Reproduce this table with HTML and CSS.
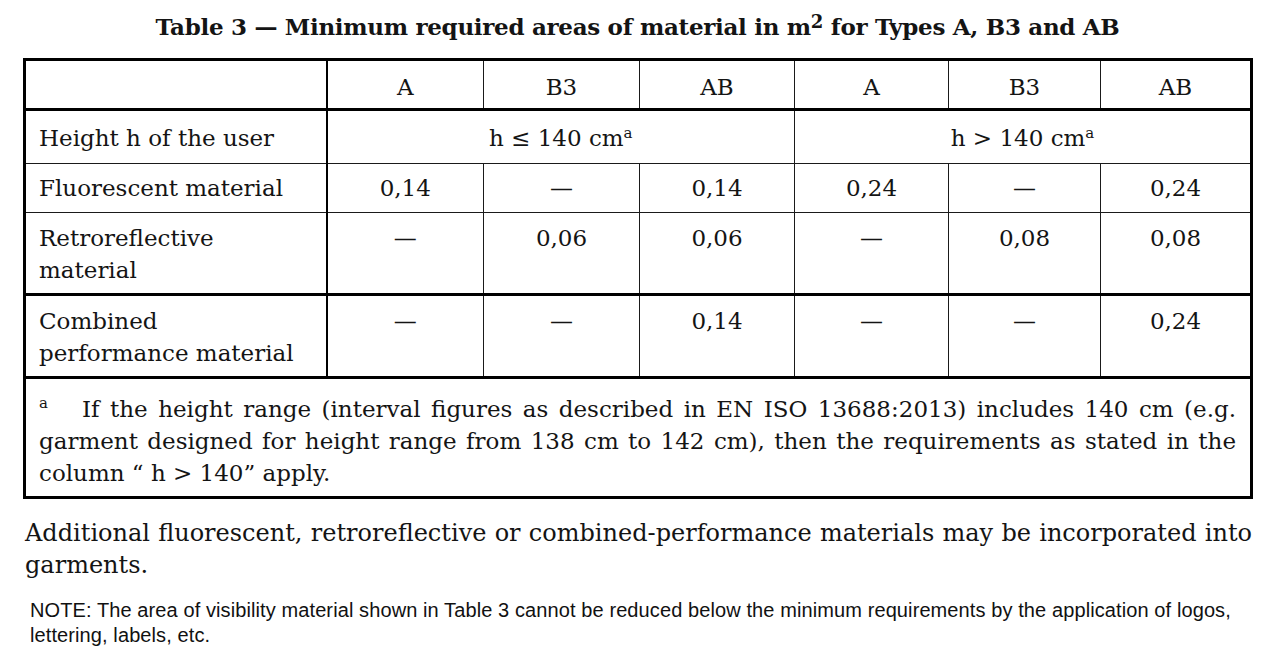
FILE: index.html
```html
<!DOCTYPE html>
<html lang="en">
<head>
<meta charset="utf-8">
<title>Table 3</title>
<link rel="stylesheet" href="styles.css">
</head>
<body>
<div class="page">
  <h1 class="title">Table 3 — Minimum required areas of material in m<sup>2</sup> for Types A, B3 and AB</h1>
  <table class="spec">
    <colgroup>
      <col class="c-label">
      <col class="c1"><col class="c2"><col class="c3">
      <col class="c4"><col class="c5"><col class="c6">
    </colgroup>
    <tr class="r-head thick">
      <td class="label"></td>
      <td>A</td><td>B3</td><td>AB</td>
      <td>A</td><td>B3</td><td>AB</td>
    </tr>
    <tr class="r-height">
      <td class="label">Height h of the user</td>
      <td colspan="3">h ≤ 140 cm<sup class="fn">a</sup></td>
      <td colspan="3">h &gt; 140 cm<sup class="fn">a</sup></td>
    </tr>
    <tr class="r-fluor">
      <td class="label">Fluorescent material</td>
      <td>0,14</td><td>—</td><td>0,14</td>
      <td>0,24</td><td>—</td><td>0,24</td>
    </tr>
    <tr class="r-retro thick">
      <td class="label">Retroreflective<br>material</td>
      <td>—</td><td>0,06</td><td>0,06</td>
      <td>—</td><td>0,08</td><td>0,08</td>
    </tr>
    <tr class="r-comb thick">
      <td class="label">Combined<br>performance material</td>
      <td>—</td><td>—</td><td>0,14</td>
      <td>—</td><td>—</td><td>0,24</td>
    </tr>
    <tr class="r-note">
      <td colspan="7" class="footnote"><span class="fn-mark">a</span>If the height range (interval figures as described in EN ISO 13688:2013) includes 140 cm (e.g. garment designed for height range from 138 cm to 142 cm), then the requirements as stated in the column “ h &gt; 140” apply.</td>
    </tr>
  </table>
  <p class="para">Additional fluorescent, retroreflective or combined-performance materials may be incorporated into garments.</p>
  <p class="note">NOTE: The area of visibility material shown in Table 3 cannot be reduced below the minimum requirements by the application of logos, lettering, labels, etc.</p>
</div>
</body>
</html>
```

FILE: styles.css
```css
html, body {
  margin: 0;
  padding: 0;
  background: #ffffff;
}

.page {
  padding: 0 27px 0 23px;
  color: #141414;
  font-family: "DejaVu Serif", "Liberation Serif", serif;
}

.title {
  margin: 0;
  height: 58px;
  box-sizing: border-box;
  padding-top: 9px;
  text-align: center;
  font-size: 23px;
  line-height: 36px;
  font-weight: bold;
  letter-spacing: -0.3px;
}

.title sup {
  font-size: 18px;
  line-height: 0;
  vertical-align: 7px;
}

.spec {
  width: 1227px;
  border-collapse: collapse;
  border: 3px solid #000;
  table-layout: fixed;
  font-size: 23px;
  line-height: 32px;
}

.c-label { width: 302px; }
.c1 { width: 157px; }
.c2 { width: 156px; }
.c3 { width: 155px; }
.c4 { width: 154px; }
.c5 { width: 152px; }
.c6 { width: 151px; }

.spec td {
  border: 1px solid #1a1a1a;
  padding: 9px 13px 7px;
  text-align: center;
  vertical-align: top;
}

.spec td.label {
  text-align: left;
  border-right: 2px solid #000;
}

.spec tr.thick td {
  border-bottom: 3px solid #000;
}

.r-head td { height: 32px; padding-top: 10px; padding-bottom: 5px; }
.r-height td { height: 34px; padding-top: 11px; padding-bottom: 7px; }
.r-fluor td { height: 32px; padding-top: 8px; padding-bottom: 8px; }

.fn {
  font-size: 15px;
  line-height: 0;
  vertical-align: 8px;
}

.spec td.footnote {
  text-align: justify;
  padding: 14px 14px 7px 13px;
  height: 96px;
  vertical-align: top;
}

.fn-mark {
  display: inline-block;
  width: 43px;
  font-size: 15px;
  line-height: 20px;
  vertical-align: top;
}

.para {
  margin: 18px 0 0 2px;
  font-size: 24px;
  line-height: 32px;
  text-align: justify;
}

.note {
  margin: 17px 0 0 7px;
  font-family: "Liberation Sans", Arial, sans-serif;
  font-size: 20px;
  line-height: 25px;
  letter-spacing: 0.1px;
  color: #111;
}
```
